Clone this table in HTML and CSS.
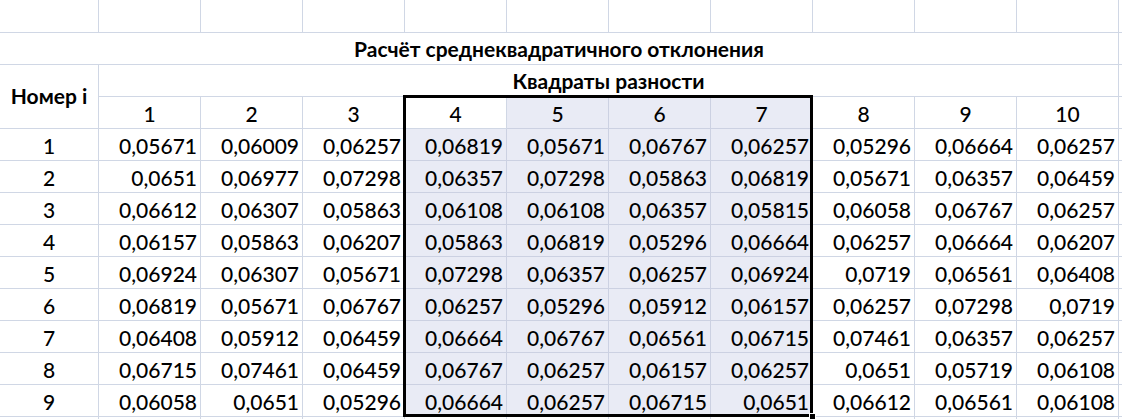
FILE: index.html
```html
<!DOCTYPE html>
<html lang="ru">
<head>
<meta charset="utf-8">
<title>Расчёт среднеквадратичного отклонения</title>
<link rel="stylesheet" href="styles.css">
</head>
<body>
<div class="sheet">
  <div class="grid">
    <div class="c"></div><div class="c"></div><div class="c"></div><div class="c"></div><div class="c"></div><div class="c"></div><div class="c"></div><div class="c"></div><div class="c"></div><div class="c"></div><div class="c"></div><div class="c"></div>

    <div class="c title">Расчёт среднеквадратичного отклонения</div><div class="c"></div>

    <div class="c rowhead">Номер i</div><div class="c subtitle">Квадраты разности</div><div class="c"></div>

    <div class="c ctr">1</div><div class="c ctr">2</div><div class="c ctr">3</div><div class="c ctr">4</div><div class="c ctr sel">5</div><div class="c ctr sel">6</div><div class="c ctr sel">7</div><div class="c ctr">8</div><div class="c ctr">9</div><div class="c ctr">10</div><div class="c"></div>

    <div class="c ctr">1</div><div class="c num">0,05671</div><div class="c num">0,06009</div><div class="c num">0,06257</div><div class="c num sel">0,06819</div><div class="c num sel">0,05671</div><div class="c num sel">0,06767</div><div class="c num sel">0,06257</div><div class="c num">0,05296</div><div class="c num">0,06664</div><div class="c num">0,06257</div><div class="c"></div>

    <div class="c ctr">2</div><div class="c num">0,0651</div><div class="c num">0,06977</div><div class="c num">0,07298</div><div class="c num sel">0,06357</div><div class="c num sel">0,07298</div><div class="c num sel">0,05863</div><div class="c num sel">0,06819</div><div class="c num">0,05671</div><div class="c num">0,06357</div><div class="c num">0,06459</div><div class="c"></div>

    <div class="c ctr">3</div><div class="c num">0,06612</div><div class="c num">0,06307</div><div class="c num">0,05863</div><div class="c num sel">0,06108</div><div class="c num sel">0,06108</div><div class="c num sel">0,06357</div><div class="c num sel">0,05815</div><div class="c num">0,06058</div><div class="c num">0,06767</div><div class="c num">0,06257</div><div class="c"></div>

    <div class="c ctr">4</div><div class="c num">0,06157</div><div class="c num">0,05863</div><div class="c num">0,06207</div><div class="c num sel">0,05863</div><div class="c num sel">0,06819</div><div class="c num sel">0,05296</div><div class="c num sel">0,06664</div><div class="c num">0,06257</div><div class="c num">0,06664</div><div class="c num">0,06207</div><div class="c"></div>

    <div class="c ctr">5</div><div class="c num">0,06924</div><div class="c num">0,06307</div><div class="c num">0,05671</div><div class="c num sel">0,07298</div><div class="c num sel">0,06357</div><div class="c num sel">0,06257</div><div class="c num sel">0,06924</div><div class="c num">0,0719</div><div class="c num">0,06561</div><div class="c num">0,06408</div><div class="c"></div>

    <div class="c ctr">6</div><div class="c num">0,06819</div><div class="c num">0,05671</div><div class="c num">0,06767</div><div class="c num sel">0,06257</div><div class="c num sel">0,05296</div><div class="c num sel">0,05912</div><div class="c num sel">0,06157</div><div class="c num">0,06257</div><div class="c num">0,07298</div><div class="c num">0,0719</div><div class="c"></div>

    <div class="c ctr">7</div><div class="c num">0,06408</div><div class="c num">0,05912</div><div class="c num">0,06459</div><div class="c num sel">0,06664</div><div class="c num sel">0,06767</div><div class="c num sel">0,06561</div><div class="c num sel">0,06715</div><div class="c num">0,07461</div><div class="c num">0,06357</div><div class="c num">0,06257</div><div class="c"></div>

    <div class="c ctr">8</div><div class="c num">0,06715</div><div class="c num">0,07461</div><div class="c num">0,06459</div><div class="c num sel">0,06767</div><div class="c num sel">0,06257</div><div class="c num sel">0,06157</div><div class="c num sel">0,06257</div><div class="c num">0,0651</div><div class="c num">0,05719</div><div class="c num">0,06108</div><div class="c"></div>

    <div class="c ctr">9</div><div class="c num">0,06058</div><div class="c num">0,0651</div><div class="c num">0,05296</div><div class="c num sel">0,06664</div><div class="c num sel">0,06257</div><div class="c num sel">0,06715</div><div class="c num sel">0,0651</div><div class="c num">0,06612</div><div class="c num">0,06561</div><div class="c num">0,06108</div><div class="c"></div>

    <div class="c"></div><div class="c"></div><div class="c"></div><div class="c"></div><div class="c"></div><div class="c"></div><div class="c"></div><div class="c"></div><div class="c"></div><div class="c"></div><div class="c"></div><div class="c"></div>
  </div>
  <div class="selection"><span class="handle"></span></div>
</div>
</body>
</html>
```

FILE: styles.css
```css
html, body {
  margin: 0;
  padding: 0;
  background: #ffffff;
  overflow: hidden;
}

body {
  width: 1122px;
  height: 419px;
  font-family: "Lato", "Open Sans", "Liberation Sans", sans-serif;
  font-size: 21px;
  font-weight: 500;
  color: #000000;
}

.sheet {
  position: relative;
  width: 1122px;
  height: 419px;
  overflow: hidden;
}

.grid {
  display: grid;
  grid-template-columns: 99px repeat(11, 102px);
  grid-template-rows: 33px repeat(13, 32px);
  width: 1221px;
}

.c {
  box-sizing: border-box;
  border-right: 1px solid #d0d7e5;
  border-bottom: 1px solid #d0d7e5;
  display: flex;
  align-items: flex-end;
  line-height: 1;
  padding: 0 3px 4px 3px;
  white-space: nowrap;
  overflow: hidden;
}

.num {
  justify-content: flex-end;
}

.ctr {
  justify-content: center;
}

.sel {
  background: #e9ebf5;
  border-right-color: #ccd1e2;
  border-bottom-color: #ccd1e2;
}

.title {
  grid-column: span 11;
  justify-content: center;
  align-items: center;
  padding: 0;
  font-weight: 700;
}

.subtitle {
  grid-column: span 10;
  justify-content: center;
  align-items: center;
  padding: 0;
  font-weight: 700;
}

.rowhead {
  grid-row: span 2;
  justify-content: center;
  align-items: center;
  padding: 0 0 2px 0;
  font-weight: 700;
}

.selection {
  position: absolute;
  left: 403px;
  top: 95px;
  width: 410px;
  height: 322px;
  box-sizing: border-box;
  border: 3px solid #000000;
  pointer-events: none;
}

.handle {
  position: absolute;
  right: -6px;
  bottom: -6px;
  width: 5px;
  height: 5px;
  background: #000000;
  border: 1px solid #ffffff;
}
```
